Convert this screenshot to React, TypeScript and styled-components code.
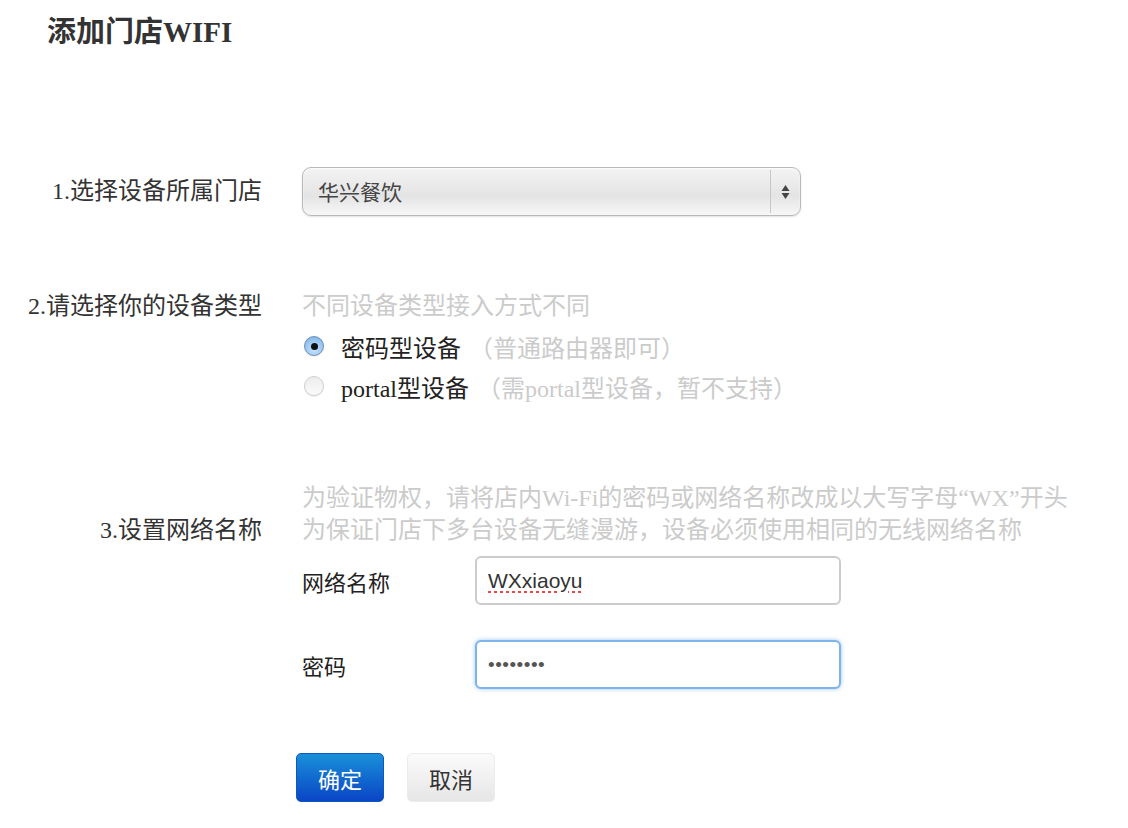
import styled, { createGlobalStyle } from "styled-components";

const GlobalStyle = createGlobalStyle`
  body {
    margin: 0;
    background: #fff;
    font-family: "Liberation Serif", "Noto Sans CJK SC", serif;
    color: #333;
  }
`;

const Page = styled.main`
  width: 1128px;
  min-height: 828px;
  box-sizing: border-box;
  padding: 14px 0 0 0;
`;

const Title = styled.h2`
  margin: 0;
  padding-left: 47px;
  font-size: 29px;
  line-height: 36px;
  font-weight: bold;
  color: #333;
`;

const Row = styled.section<{ $gap: number }>`
  display: grid;
  grid-template-columns: 262px 1fr;
  column-gap: 40px;
  margin-top: ${(p) => p.$gap}px;
`;

const Label = styled.div<{ $lh: number; $pad?: number }>`
  text-align: right;
  font-size: 24px;
  line-height: ${(p) => p.$lh}px;
  padding-top: ${(p) => p.$pad ?? 0}px;
  color: #333;
  white-space: nowrap;
`;

const Content = styled.div`
  display: flex;
  flex-direction: column;
`;

const Select = styled.div`
  width: 499px;
  height: 49px;
  box-sizing: border-box;
  display: flex;
  align-items: stretch;
  border: 1px solid #b9b9b9;
  border-radius: 9px;
  background: linear-gradient(#f3f3f3, #e4e4e4 60%, #f7f7f7);
  box-shadow: inset 0 1px 2px rgba(255, 255, 255, 0.9), 0 1px 2px rgba(0, 0, 0, 0.12);
  font-family: "Noto Sans CJK SC", "Liberation Sans", sans-serif;
`;

const SelectText = styled.span`
  flex: 1;
  padding-left: 15px;
  font-size: 21px;
  line-height: 46px;
  color: #444;
`;

const SelectArrows = styled.span`
  width: 29px;
  border-left: 1px solid #c6c6c6;
  margin: 2px 0;
  display: flex;
  align-items: center;
  justify-content: center;
`;

const Hint = styled.div<{ $lh: number }>`
  font-size: 24px;
  line-height: ${(p) => p.$lh}px;
  color: #cbcbcb;
  white-space: nowrap;
`;

const Option = styled.label`
  display: flex;
  align-items: center;
  height: 40px;
  font-size: 24px;
  color: #222;
  white-space: nowrap;
`;

const Radio = styled.span<{ $checked?: boolean }>`
  width: 20px;
  height: 20px;
  box-sizing: border-box;
  border-radius: 50%;
  margin: 0 17px 0 2px;
  display: flex;
  align-items: center;
  justify-content: center;
  border: 1px solid ${(p) => (p.$checked ? "#6f8fb8" : "#cfcfcf")};
  background: ${(p) =>
    p.$checked
      ? "radial-gradient(circle at 50% 70%, #c9e3fb, #8ebfee 70%, #6aa4dc)"
      : "linear-gradient(#ececec, #fbfbfb)"};
  box-shadow: 0 1px 1px rgba(0, 0, 0, 0.08);
  &::after {
    content: "";
    display: ${(p) => (p.$checked ? "block" : "none")};
    width: 7px;
    height: 7px;
    border-radius: 50%;
    background: #111;
  }
`;

const Note = styled.span`
  color: #cbcbcb;
  margin-left: 8px;
`;

const SubForm = styled.div`
  display: grid;
  grid-template-columns: 173px 366px;
  row-gap: 35px;
  margin-top: 10px;
  align-items: center;
`;

const SubLabel = styled.span`
  font-size: 22px;
  color: #222;
`;

const Input = styled.input<{ $focus?: boolean }>`
  width: 366px;
  height: 49px;
  box-sizing: border-box;
  padding: 0 11px;
  font-family: "Liberation Sans", Arial, sans-serif;
  font-size: 21px;
  color: #333;
  border-radius: 6px;
  outline: none;
  border: 2px solid ${(p) => (p.$focus ? "#7db5ea" : "#cccccc")};
  box-shadow: ${(p) => (p.$focus ? "0 0 4px rgba(90, 160, 235, 0.6)" : "none")};
  background: #fff;
`;

const Misspelled = styled(Input)`
  text-decoration: underline dotted #e84a4a;
  text-decoration-thickness: 3px;
  text-underline-offset: 3px;
`;

const Password = styled(Input)`
  font-size: 19px;
  letter-spacing: 0.5px;
  color: #555;
`;

const Buttons = styled.div`
  display: flex;
  gap: 23px;
  margin: 64px 0 0 296px;
`;

const Button = styled.button<{ $primary?: boolean }>`
  width: 88px;
  height: 49px;
  border-radius: 5px;
  font-family: "Noto Sans CJK SC", "Liberation Sans", sans-serif;
  font-size: 22px;
  cursor: pointer;
  border: 1px solid ${(p) => (p.$primary ? "#0d57c4" : "#ececec")};
  color: ${(p) => (p.$primary ? "#fff" : "#333")};
  background: ${(p) =>
    p.$primary
      ? "linear-gradient(#1990d8, #0a45c6)"
      : "linear-gradient(#fbfbfb, #e6e6e6)"};
`;

const Arrows = () => (
  <svg width="11" height="20" viewBox="0 0 11 20">
    <path d="M5.5 3 L9.5 9 L1.5 9 Z" fill="#444" />
    <path d="M5.5 17 L9.5 11 L1.5 11 Z" fill="#444" />
  </svg>
);

export default function App() {
  return (
    <>
      <GlobalStyle />
      <Page>
        <Title>添加门店WIFI</Title>

        <Row $gap={117}>
          <Label $lh={49}>1.选择设备所属门店</Label>
          <Content>
            <Select>
              <SelectText>华兴餐饮</SelectText>
              <SelectArrows>
                <Arrows />
              </SelectArrows>
            </Select>
          </Content>
        </Row>

        <Row $gap={70}>
          <Label $lh={40}>2.请选择你的设备类型</Label>
          <Content>
            <Hint $lh={40}>不同设备类型接入方式不同</Hint>
            <Option>
              <Radio $checked />
              密码型设备
              <Note>（普通路由器即可）</Note>
            </Option>
            <Option>
              <Radio />
              portal型设备
              <Note>（需portal型设备，暂不支持）</Note>
            </Option>
          </Content>
        </Row>

        <Row $gap={76}>
          <Label $lh={32} $pad={32}>
            3.设置网络名称
          </Label>
          <Content>
            <Hint $lh={32}>为验证物权，请将店内Wi-Fi的密码或网络名称改成以大写字母“WX”开头</Hint>
            <Hint $lh={32}>为保证门店下多台设备无缝漫游，设备必须使用相同的无线网络名称</Hint>
            <SubForm>
              <SubLabel>网络名称</SubLabel>
              <Misspelled type="text" defaultValue="WXxiaoyu" spellCheck={false} />
              <SubLabel>密码</SubLabel>
              <Password $focus type="password" defaultValue="12345678" />
            </SubForm>
          </Content>
        </Row>

        <Buttons>
          <Button $primary>确定</Button>
          <Button>取消</Button>
        </Buttons>
      </Page>
    </>
  );
}
